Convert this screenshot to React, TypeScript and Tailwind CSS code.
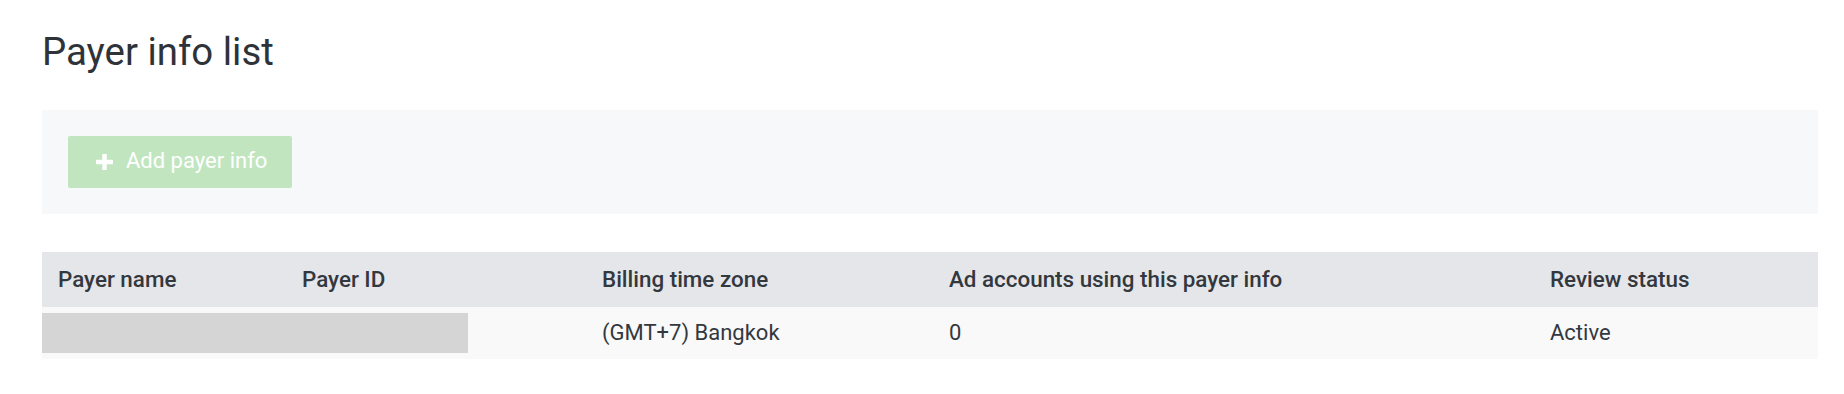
import React from "react";

export default function App() {
  const font = "font-['Roboto',_'Liberation_Sans',_sans-serif]";
  return (
    <div className={`${font} w-full bg-white pl-[42px] pr-[26px] pt-[30px] pb-[35px]`}>
      <h1 className="h-[44px] text-[38.4px] leading-[44px] font-normal text-[#2e3339]">Payer info list</h1>
      <div className="mt-[36px] bg-[#f7f8f9] p-[26px]">
        <button className="flex h-[52px] w-[224px] items-center rounded-[2px] bg-[#c1e6bf] pb-[2px] pl-[28px] text-[22px] leading-[26px] text-white">
          <svg width="17" height="16" viewBox="0 0 17 16" className="mr-[13px] mt-[1px]">
            <rect x="6.25" y="0" width="4.5" height="16" rx="0.5" fill="white" />
            <rect x="0" y="5.75" width="17" height="4.5" rx="0.5" fill="white" />
          </svg>
          <span>Add payer info</span>
        </button>
      </div>
      <div className="mt-[38px]">
        <div className="grid h-[55px] grid-cols-[244px_300px_347px_601px_1fr] items-center bg-[#e5e6e9] pb-[2px] text-[22.4px] font-medium leading-[26px] text-[#33383e]">
          <div className="pl-[16px]">Payer name</div>
          <div className="pl-[16px]">Payer ID</div>
          <div className="pl-[16px]">Billing time zone</div>
          <div className="pl-[16px]">Ad accounts using this payer info</div>
          <div className="pl-[16px]">Review status</div>
        </div>
        <div className="grid h-[52px] grid-cols-[244px_300px_347px_601px_1fr] items-center bg-[#f9f9f9] text-[22px] leading-[26px] text-[#33383e]">
          <div className="col-span-2">
            <div className="h-[40px] w-[426px] bg-[#d5d5d5]" />
          </div>
          <div className="pl-[16px]">(GMT+7) Bangkok</div>
          <div className="pl-[16px]">0</div>
          <div className="pl-[16px]">Active</div>
        </div>
      </div>
    </div>
  );
}
